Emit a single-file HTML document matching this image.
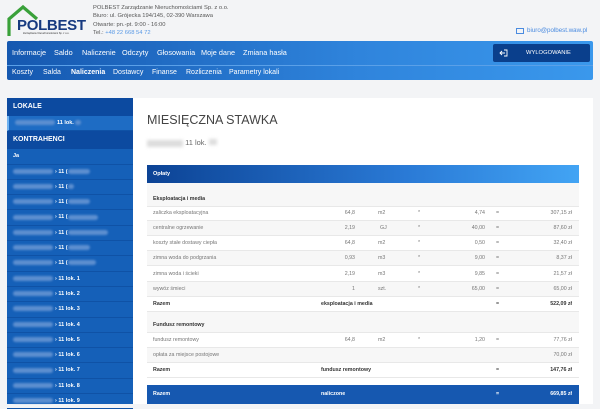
<!DOCTYPE html><html><head><meta charset="utf-8"><style>
*{margin:0;padding:0;box-sizing:border-box}
body{width:600px;height:404px;overflow:hidden;background:#f3f4f6;font-family:"Liberation Sans",sans-serif;position:relative}
.a{position:absolute}
.nav{left:7px;top:41px;width:586px;height:39px;background:linear-gradient(90deg,#1558b0,#2f84dc 60%,#3a98ec);border-radius:2px}
.nav .m{position:absolute;top:0;height:24px;line-height:24px;font-size:7.3px;color:#fff}
.nav .s{position:absolute;top:25px;height:14px;line-height:14px;font-size:7px;color:#fff}
.sep{position:absolute;left:0;right:0;top:24px;height:1px;background:#5aa0e8}
.side{left:7px;top:98px;width:126px;height:306px;background:#1560b8}
.sh{height:18px;line-height:18px;font-size:7px;font-weight:bold;color:#fff;padding-left:6px;background:#0c4aa0}
.sr{height:15.3px;line-height:15px;font-size:5.5px;color:#fff;font-weight:bold;padding-left:6px;border-bottom:1px solid #0f52a6}
.bl{display:inline-block;width:40px;height:5px;background:#5d8fd0;border-radius:3px;margin-right:2px;vertical-align:middle;filter:blur(1px)}
.bl2{display:inline-block;width:22px;height:5px;background:#5d8fd0;border-radius:3px;vertical-align:middle;filter:blur(1px)}
.main{left:133px;top:98px;width:460px;height:306px;background:#fff}
.row{position:absolute;left:147px;width:432px;height:15px;font-size:5.3px;color:#777;line-height:15px;border-bottom:1px solid #e8e8e8}
.row span{position:absolute}
.b{font-weight:bold;color:#333}
</style></head><body>
<svg class="a" style="left:6px;top:4px" width="34" height="34" viewBox="0 0 34 34"><path d="M3 32V15L17 3l14 12" fill="none" stroke="#3aa13a" stroke-width="3.2"/></svg>
<div class="a" style="left:17px;top:17px;font-size:15px;font-weight:bold;color:#173a80;letter-spacing:-0.3px">POLBEST</div>
<div class="a" style="left:23px;top:32px;font-size:2.5px;color:#333">Zarządzanie Nieruchomościami Sp. z o.o.</div>
<div class="a" style="left:93px;top:4px;font-size:5.8px;color:#555;line-height:8.3px">POLBEST Zarządzanie Nieruchomościami Sp. z o.o.<br>Biuro: ul. Grójecka 194/145, 02-390 Warszawa<br>Otwarte: pn.-pt. 9:00 - 16:00<br>Tel.: <span style="color:#5a9ae6">+48 22 668 54 72</span></div>
<div class="a" style="left:516px;top:28px;width:8px;height:6px;border:1px solid #4a8be0"></div>
<div class="a" style="left:527px;top:27px;font-size:6.2px;color:#4a8be0">biuro@polbest.waw.pl</div>
<div class="a nav">
<div class="m" style="left:5px">Informacje</div><div class="m" style="left:47px">Saldo</div><div class="m" style="left:75px">Naliczenie</div><div class="m" style="left:115px">Odczyty</div><div class="m" style="left:150px">Głosowania</div><div class="m" style="left:194px">Moje dane</div><div class="m" style="left:236px">Zmiana hasła</div>
<div class="sep"></div>
<div class="s" style="left:5px">Koszty</div><div class="s" style="left:36px">Salda</div><div class="s" style="left:64px;font-weight:bold">Naliczenia</div><div class="s" style="left:106px">Dostawcy</div><div class="s" style="left:145px">Finanse</div><div class="s" style="left:179px">Rozliczenia</div><div class="s" style="left:222px">Parametry lokali</div>
<div style="position:absolute;left:486px;top:3px;width:97px;height:18px;background:#0a3f8c;border-radius:2px;color:#fff;font-size:5.8px;line-height:18px"><svg style="position:absolute;left:6px;top:5px" width="9" height="8" viewBox="0 0 9 8"><path d="M5 1h3v6H5M6 4H1M3 2L1 4l2 2" fill="none" stroke="#fff" stroke-width="0.9"/></svg><span style="position:absolute;left:33px">WYLOGOWANIE</span></div>
</div>
<div class="a side">
<div class="sh">LOKALE</div>
<div class="sr" style="background:#1e6cc4;border-left:2px solid #6fb2f0"><span class="bl"></span>11 lok. <span class="bl2" style="width:6px"></span></div>
<div class="sh">KONTRAHENCI</div>
<div class="sr">Ja</div>
<div class="sr"><span class="bl"></span>› 11 (<span class="bl2"></span></div>
<div class="sr"><span class="bl"></span>› 11 (<span class="bl2" style="width:6px"></span></div>
<div class="sr"><span class="bl"></span>› 11 (<span class="bl2"></span></div>
<div class="sr"><span class="bl"></span>› 11 (<span class="bl2" style="width:30px"></span></div>
<div class="sr"><span class="bl"></span>› 11 (<span class="bl2" style="width:40px"></span></div>
<div class="sr"><span class="bl"></span>› 11 (<span class="bl2"></span></div>
<div class="sr"><span class="bl"></span>› 11 (<span class="bl2" style="width:28px"></span></div>
<div class="sr"><span class="bl"></span>› 11 lok. 1</div>
<div class="sr"><span class="bl"></span>› 11 lok. 2</div>
<div class="sr"><span class="bl"></span>› 11 lok. 3</div>
<div class="sr"><span class="bl"></span>› 11 lok. 4</div>
<div class="sr"><span class="bl"></span>› 11 lok. 5</div>
<div class="sr"><span class="bl"></span>› 11 lok. 6</div>
<div class="sr"><span class="bl"></span>› 11 lok. 7</div>
<div class="sr"><span class="bl"></span>› 11 lok. 8</div>
<div class="sr"><span class="bl"></span>› 11 lok. 9</div>
</div>
<div class="a main"></div>
<div class="a" style="left:147px;top:113px;font-size:12.5px;color:#444">MIESIĘCZNA STAWKA</div>
<div class="a" style="left:147px;top:138px;font-size:7.5px;color:#666"><span style="display:inline-block;width:36px;height:7px;background:#ddd;filter:blur(1.5px);vertical-align:middle"></span> 11 lok. <span style="display:inline-block;width:8px;height:6px;background:#ddd;filter:blur(1.5px)"></span></div>
<div class="a" style="left:147px;top:165px;width:432px;height:18px;background:linear-gradient(90deg,#0c4395,#2a7ad6 60%,#42a4f4);color:#fff;font-size:5.5px;font-weight:bold;line-height:18px;padding-left:6px">Opłaty</div>
<div class="a" style="left:147px;top:183px;width:432px;height:9px;background:#f7f7f7"></div>
<div class="row b" style="top:192px;background:#f7f7f7"><span style="left:6px">Eksploatacja i media</span></div>
<div class="row" style="top:206px"><span style="left:6px">zaliczka eksploatacyjna</span><span style="right:224px">64,8</span><span style="left:231px">m2</span><span style="left:271px">*</span><span style="right:94px">4,74</span><span style="left:349px">=</span><span style="right:7px">307,15 zł</span></div>
<div class="row" style="top:221px;background:#f7f7f7"><span style="left:6px">centralne ogrzewanie</span><span style="right:224px">2,19</span><span style="left:233px">GJ</span><span style="left:271px">*</span><span style="right:94px">40,00</span><span style="left:349px">=</span><span style="right:7px">87,60 zł</span></div>
<div class="row" style="top:236px"><span style="left:6px">koszty stałe dostawy ciepła</span><span style="right:224px">64,8</span><span style="left:231px">m2</span><span style="left:271px">*</span><span style="right:94px">0,50</span><span style="left:349px">=</span><span style="right:7px">32,40 zł</span></div>
<div class="row" style="top:251px;background:#f7f7f7"><span style="left:6px">zimna woda do podgrzania</span><span style="right:224px">0,93</span><span style="left:231px">m3</span><span style="left:271px">*</span><span style="right:94px">9,00</span><span style="left:349px">=</span><span style="right:7px">8,37 zł</span></div>
<div class="row" style="top:267px"><span style="left:6px">zimna woda i ścieki</span><span style="right:224px">2,19</span><span style="left:231px">m3</span><span style="left:271px">*</span><span style="right:94px">9,85</span><span style="left:349px">=</span><span style="right:7px">21,57 zł</span></div>
<div class="row" style="top:282px;background:#f7f7f7"><span style="left:6px">wywóz śmieci</span><span style="right:224px">1</span><span style="left:231px">szt.</span><span style="left:271px">*</span><span style="right:94px">65,00</span><span style="left:349px">=</span><span style="right:7px">65,00 zł</span></div>
<div class="row b" style="top:297px"><span style="left:6px">Razem</span><span style="left:174px">eksploatacja i media</span><span style="left:349px;font-weight:normal">=</span><span style="right:7px">522,09 zł</span></div>
<div class="a" style="left:147px;top:312px;width:432px;height:6px;background:#f7f7f7"></div>
<div class="row b" style="top:318px;background:#f7f7f7"><span style="left:6px">Fundusz remontowy</span></div>
<div class="row" style="top:333px"><span style="left:6px">fundusz remontowy</span><span style="right:224px">64,8</span><span style="left:231px">m2</span><span style="left:271px">*</span><span style="right:94px">1,20</span><span style="left:349px">=</span><span style="right:7px">77,76 zł</span></div>
<div class="row" style="top:348px;background:#f7f7f7"><span style="left:6px">opłata za miejsce postojowe</span><span style="right:7px">70,00 zł</span></div>
<div class="row b" style="top:363px"><span style="left:6px">Razem</span><span style="left:174px">fundusz remontowy</span><span style="left:349px;font-weight:normal">=</span><span style="right:7px">147,76 zł</span></div>
<div class="row b" style="top:385px;height:19px;line-height:19px;background:#1658b0;color:#fff;border:0"><span style="left:6px">Razem</span><span style="left:174px">naliczone</span><span style="left:349px">=</span><span style="right:7px">669,85 zł</span></div>
</body></html>
